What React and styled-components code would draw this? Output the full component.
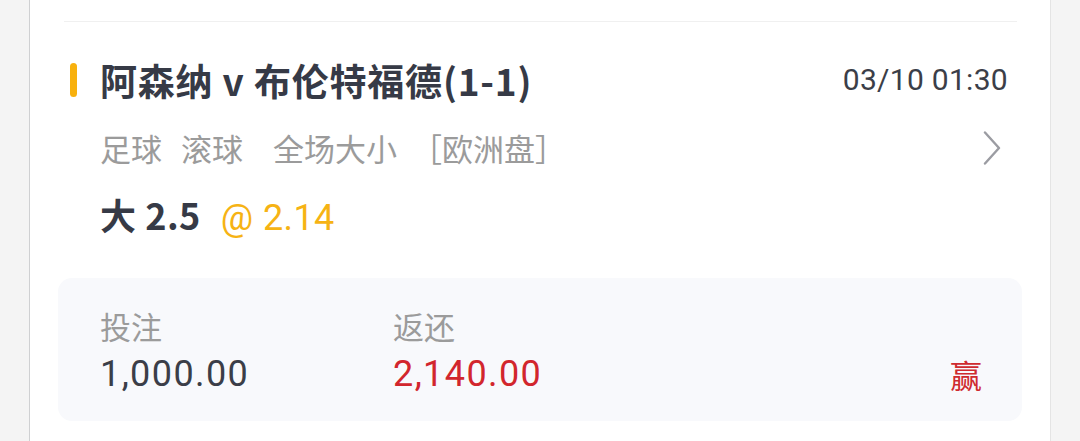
import React from 'react'
import styled, { createGlobalStyle } from "styled-components";

const GlobalStyle = createGlobalStyle`
  body {
    margin: 0;
    background: #f4f4f4;
    font-family: Roboto, "Noto Sans CJK SC", sans-serif;
  }
`;

const bet = {
  match: "阿森纳 v 布伦特福德(1-1)",
  time: "03/10 01:30",
  tags: ["足球", "滚球", "全场大小", "［欧洲盘］"],
  pick: "大 2.5",
  odds: "2.14",
  stake: "1,000.00",
  payout: "2,140.00",
  result: "赢",
};

function App() {
  return (
    <>
      <GlobalStyle />
      <Page>
        <Card>
          <Divider />
          <Item>
            <Header>
              <Marker />
              <Title>{bet.match}</Title>
              <Time>{bet.time}</Time>
            </Header>
            <TagRow>
              <Tags>
                {bet.tags.map((t, i) => (
                  <Tag key={t} $gap={[19, 30, 14, 0][i]}>{t}</Tag>
                ))}
              </Tags>
              <Chevron viewBox="0 0 18 34" fill="none">
                <path d="M2 1.5 L16 17 L2 32.5" stroke="#9b9ca2" strokeWidth="2.4" strokeLinecap="round" strokeLinejoin="round" />
              </Chevron>
            </TagRow>
            <PickRow>
              <Pick>{bet.pick}</Pick>
              <Odds>@ {bet.odds}</Odds>
            </PickRow>
          </Item>
          <Summary>
            <Stat>
              <Label>投注</Label>
              <Value>{bet.stake}</Value>
            </Stat>
            <Stat>
              <Label>返还</Label>
              <Value $win>{bet.payout}</Value>
            </Stat>
            <Result>{bet.result}</Result>
          </Summary>
          <Spacer />
        </Card>
      </Page>
    </>
  )
}

const Page = styled.div`
  height: 441px;
  overflow: hidden;
  padding-left: 29px;
`;

const Card = styled.div`
  width: 1020px;
  height: 100%;
  background: #fff;
  border-left: 1px solid #cfd0d2;
  border-right: 1px solid #e4e4e4;
  padding-top: 21px;
  box-sizing: content-box;
`;

const Divider = styled.div`
  height: 1px;
  margin: 0 33px 0 34px;
  background: #f0f0f0;
`;

const Item = styled.div`
  padding: 36px 42px 0 40px;
`;

const Header = styled.div`
  display: flex;
  align-items: center;
  height: 44px;
`;

const Marker = styled.span`
  width: 7px;
  height: 34px;
  border-radius: 4px;
  background: #f8b10e;
  margin-right: 23px;
`;

const Title = styled.h2`
  margin: 0;
  flex: 1;
  font-size: 37px;
  font-weight: 700;
  line-height: 44px;
  letter-spacing: 0.8px;
  color: #363a46;
  font-family: "Noto Sans CJK SC", sans-serif;
`;

const Time = styled.span`
  font-size: 30px;
  color: #3b3e48;
  line-height: 44px;
  letter-spacing: 0.3px;
`;

const TagRow = styled.div`
  display: flex;
  align-items: center;
  justify-content: space-between;
  margin-top: 24px;
  padding-left: 30px;
  height: 44px;
`;

const Tags = styled.div`
  display: flex;
  font-family: "Noto Sans CJK SC", sans-serif;
  font-size: 31px;
  line-height: 44px;
  color: #9b9b9b;
`;

const Tag = styled.span`
  margin-right: ${p => p.$gap}px;
`;

const Chevron = styled.svg`
  width: 18px;
  height: 34px;
  margin-right: 7px;
`;

const PickRow = styled.div`
  display: flex;
  align-items: baseline;
  margin-top: 22px;
  padding-left: 30px;
  line-height: 44px;
`;

const Pick = styled.span`
  font-size: 36px;
  font-weight: 700;
  letter-spacing: 0.5px;
  color: #363a46;
  font-family: "Noto Sans CJK SC", sans-serif;
`;

const Odds = styled.span`
  margin-left: 20px;
  font-size: 36px;
  letter-spacing: 0.4px;
  color: #f6b314;
`;

const Summary = styled.div`
  display: flex;
  align-items: flex-end;
  margin: 38px 28px 0 28px;
  padding: 28px 40px 25px 42px;
  border-radius: 14px;
  background: #f8f9fc;
`;

const Stat = styled.div`
  width: 293px;
  display: flex;
  flex-direction: column;
`;

const Label = styled.span`
  font-family: "Noto Sans CJK SC", sans-serif;
  font-size: 31px;
  line-height: 40px;
  color: #9b9b9b;
`;

const Value = styled.span`
  margin-top: 6px;
  font-size: 36px;
  line-height: 44px;
  letter-spacing: 1.4px;
  color: ${p => (p.$win ? "#d2262d" : "#3b3e48")};
`;

const Result = styled.span`
  margin-left: auto;
  font-family: "Noto Sans CJK SC", sans-serif;
  font-size: 32px;
  line-height: 44px;
  color: #cf2b2f;
`;

const Spacer = styled.div`
  height: 20px;
`;

export default App
